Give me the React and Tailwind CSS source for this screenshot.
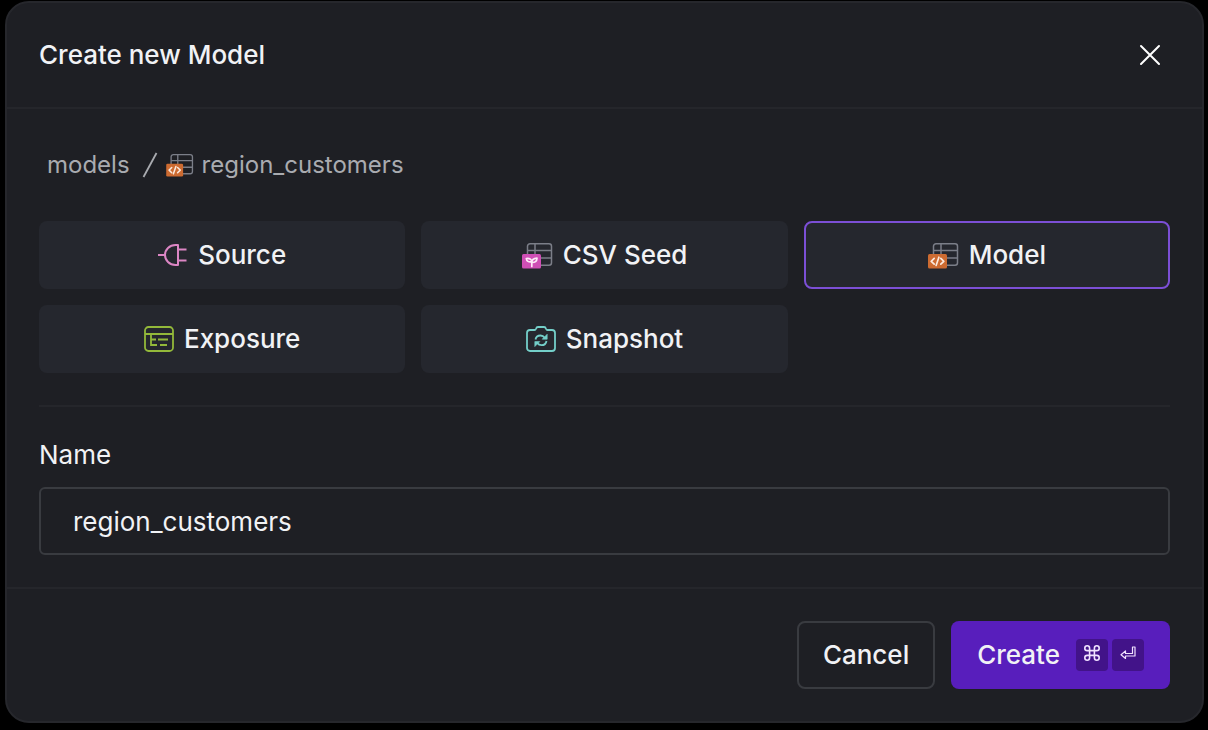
import { useState } from "react";

function TableGrid({ stroke }) {
  return (
    <g fill="none" stroke={stroke} strokeWidth="1.5">
      <rect x="5.5" y="1.8" width="24" height="21.5" rx="2.5" />
      <path d="M5.5 8.5h24M5.5 16h24M13 1.8v21.5" />
    </g>
  );
}

function ModelIcon({ className, stroke = "#7b7e88" }) {
  return (
    <svg viewBox="0 0 31 27" className={className} aria-hidden="true">
      <TableGrid stroke={stroke} />
      <rect x="0" y="12" width="19" height="14.5" rx="1.5" fill="#cd6b31" />
      <path
        d="M6.2 16.4 3.2 19.3l3 2.9M12.8 16.4l3 2.9-3 2.9M10.9 15.2 8.1 23.4"
        fill="none"
        stroke="#fbe9dd"
        strokeWidth="1.7"
        strokeLinecap="round"
        strokeLinejoin="round"
      />
    </svg>
  );
}

function SeedIcon({ className }) {
  return (
    <svg viewBox="0 0 31 27" className={className} aria-hidden="true">
      <TableGrid stroke="#7b7e88" />
      <rect x="0" y="12" width="19" height="14.5" rx="1.5" fill="#cf4fb5" />
      <path
        d="M9.8 24.5v-4.700M9.800 19.800c-3.200.6-5.300-.6-5.500-3.300 3.200-.5 5.300.6 5.500 3.300ZM9.800 20.500c0-2.800 1.800-4.200 5.200-4.300-.1 3-2 4.500-5.200 4.300Z"
        fill="none"
        stroke="#fdeaf8"
        strokeWidth="1.700"
        strokeLinecap="round"
        strokeLinejoin="round"
      />
    </svg>
  );
}

function SourceIcon({ className }) {
  return (
    <svg
      viewBox="0 0 30 24"
      className={className}
      fill="none"
      stroke="#dc86c4"
      strokeWidth="2"
      aria-hidden="true"
    >
      <path d="M0 12h7M20.500 6.500h8M20.500 17.500h8" />
      <path d="M20 2v20h-2.500C11.500 22 7 17.500 7 12S11.500 2 17.500 2Z" strokeLinejoin="round" />
    </svg>
  );
}

function ExposureIcon({ className }) {
  return (
    <svg
      viewBox="0 0 30 26"
      className={className}
      fill="none"
      stroke="#93b93a"
      strokeWidth="1.800"
      aria-hidden="true"
    >
      <rect x="1" y="1" width="28" height="24" rx="3.500" />
      <path d="M1 8h28M7 8.500v10.500h6M7 13.500h5M14 13.500h10M16 19h7" />
    </svg>
  );
}

function SnapshotIcon({ className }) {
  return (
    <svg
      viewBox="0 0 30 26"
      className={className}
      fill="none"
      stroke="#74cfc9"
      strokeWidth="1.800"
      strokeLinejoin="round"
      aria-hidden="true"
    >
      <path d="M4 4h4.500c1 0 1.200-.5 1.500-1.300C10.400 1.500 11 1 12 1h6c1 0 1.600.5 2 1.700.3.800.5 1.300 1.500 1.300H26a3 3 0 0 1 3 3v15a3 3 0 0 1-3 3H4a3 3 0 0 1-3-3V7a3 3 0 0 1 3-3Z" />
      <path d="M9.500 13.500c.5-3 2.500-4 5-4 2 0 3.200.8 4.200 2.200M20.500 15c-.5 3-2.500 4.200-5 4.200-2 0-3.200-.8-4.200-2.200" />
      <path d="M21.200 8.200v5h-5ZM8.800 20.600v-5h5Z" fill="#74cfc9" strokeWidth="0.600" />
    </svg>
  );
}

const types = [
  { id: "source", label: "Source", Icon: SourceIcon, size: "w-[30px] h-6" },
  { id: "seed", label: "CSV Seed", Icon: SeedIcon, size: "w-[31px] h-[27px]" },
  { id: "model", label: "Model", Icon: ModelIcon, size: "w-[31px] h-[27px]" },
  { id: "exposure", label: "Exposure", Icon: ExposureIcon, size: "w-[30px] h-[26px]" },
  { id: "snapshot", label: "Snapshot", Icon: SnapshotIcon, size: "w-[30px] h-[26px]" },
];

function App() {
  const [type, setType] = useState("model");
  const [name, setName] = useState("region_customers");

  return (
    <div className="min-h-screen bg-black pt-px pl-[5px] pr-1 font-['Inter',sans-serif] text-[26px] leading-8 text-[#f1f2f5]">
      <div
        role="dialog"
        aria-labelledby="dialog-title"
        className="rounded-3xl border-2 border-[#26272c] bg-[#1e1f24]"
      >
        {/* Header */}
        <header className="flex h-[106px] items-center justify-between border-b-2 border-[#25262b] px-8">
          <h1 id="dialog-title" className="font-medium">
            Create new Model
          </h1>
          <button type="button" aria-label="Close" className="flex size-10 items-center justify-center">
            <svg viewBox="0 0 22 22" className="size-[22px]" aria-hidden="true">
              <path d="M2 2l18 18M20 2 2 20" stroke="#fff" strokeWidth="2" strokeLinecap="round" />
            </svg>
          </button>
        </header>

        <form onSubmit={(e) => e.preventDefault()}>
          <div className="p-8">
            {/* Path */}
            <nav aria-label="Path" className="mb-8 flex h-12 items-center px-2 text-2xl text-[#a9abb0]">
              <span>models</span>
              <svg viewBox="0 0 16 26" className="ml-3 mr-2 h-[26px] w-4" aria-hidden="true">
                <path d="M1.500 25 14.500 1" stroke="#a9abb0" strokeWidth="1.800" />
              </svg>
              <ModelIcon className="mr-2 h-6 w-7" />
              <span>{name}</span>
            </nav>

            {/* Type picker */}
            <div className="grid grid-cols-3 gap-4">
              {types.map(({ id, label, Icon, size }) => (
                <button
                  key={id}
                  type="button"
                  aria-pressed={type === id}
                  onClick={() => setType(id)}
                  className={`flex h-[68px] items-center justify-center gap-2.5 rounded-lg border-2 bg-[#25272e] font-medium ${
                    type === id ? "border-[#7c4fd6]" : "border-transparent"
                  }`}
                >
                  <Icon className={size} />
                  {label}
                </button>
              ))}
            </div>

            <hr className="my-8 border-t-2 border-[#25262b]" />

            <label htmlFor="model-name" className="mb-4 block">
              Name
            </label>
            <input
              id="model-name"
              type="text"
              value={name}
              onChange={(e) => setName(e.target.value)}
              className="block h-[68px] w-full rounded-md border-2 border-[#393b40] bg-transparent px-8 outline-none"
            />
          </div>

          {/* Actions */}
          <footer className="flex justify-end gap-4 border-t-2 border-[#25262b] p-8">
            <button type="button" className="h-[68px] rounded-lg border-2 border-[#393b40] px-6 font-medium">
              Cancel
            </button>
            <button
              type="submit"
              className="flex h-[68px] items-center rounded-lg bg-[#581ebc] px-[26px] font-medium"
            >
              Create
              <kbd className="ml-4 flex size-8 items-center justify-center rounded bg-[#421389] pb-1">
                <svg viewBox="2 2 20 20" className="size-4" fill="none" stroke="#f0e2ff" strokeWidth="2" aria-label="Command">
                  <path d="M15 6v12a3 3 0 1 0 3-3H6a3 3 0 1 0 3 3V6a3 3 0 1 0-3 3h12a3 3 0 1 0-3-3" />
                </svg>
              </kbd>
              <kbd className="ml-1 flex size-8 items-center justify-center rounded bg-[#421389] pb-1">
                <svg viewBox="0 0 16 14" className="h-3.5 w-4" fill="none" stroke="#f0e2ff" strokeWidth="1.200" strokeLinejoin="round" aria-label="Enter">
                  <path d="M12.500 1H15v9H5.500v2.500L1 8.700 5.500 5v2.500h7Z" />
                </svg>
              </kbd>
            </button>
          </footer>
        </form>
      </div>
    </div>
  );
}

export default App;
